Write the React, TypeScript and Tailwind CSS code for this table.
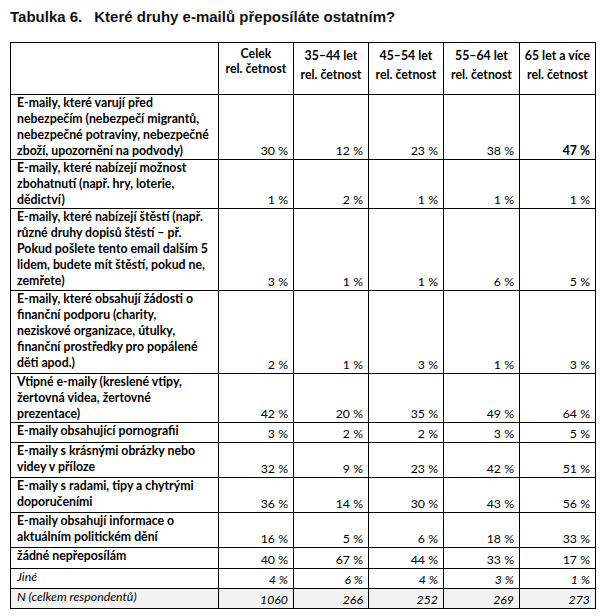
const rows: { label: React.ReactNode; vals: string[]; h?: string; bold47?: boolean }[] = [
  {
    label: (
      <>
        E-maily, které varují před
        <br />
        nebezpečím (nebezpečí migrantů,
        <br />
        nebezpečné potraviny, nebezpečné
        <br />
        zboží, upozornění na podvody)
      </>
    ),
    vals: ['30 %', '12 %', '23 %', '38 %', '47 %'],
    bold47: true,
  },
  {
    label: (
      <>
        E-maily, které nabízejí možnost
        <br />
        zbohatnutí (např. hry, loterie,
        <br />
        dědictví)
      </>
    ),
    vals: ['1 %', '2 %', '1 %', '1 %', '1 %'],
  },
  {
    label: (
      <>
        E-maily, které nabízejí štěstí (např.
        <br />
        různé druhy dopisů štěstí – př.
        <br />
        Pokud pošlete tento email dalším 5
        <br />
        lidem, budete mít štěstí, pokud ne,
        <br />
        zemřete)
      </>
    ),
    vals: ['3 %', '1 %', '1 %', '6 %', '5 %'],
    h: 'h-[82px]',
  },
  {
    label: (
      <>
        E-maily, které obsahují žádosti o
        <br />
        finanční podporu (charity,
        <br />
        neziskové organizace, útulky,
        <br />
        finanční prostředky pro popálené
        <br />
        děti apod.)
      </>
    ),
    vals: ['2 %', '1 %', '3 %', '1 %', '3 %'],
    h: 'h-[83px]',
  },
  {
    label: (
      <>
        Vtipné e-maily (kreslené vtipy,
        <br />
        žertovná videa, žertovné
        <br />
        prezentace)
      </>
    ),
    vals: ['42 %', '20 %', '35 %', '49 %', '64 %'],
  },
  { label: 'E-maily obsahující pornografii', vals: ['3 %', '2 %', '2 %', '3 %', '5 %'], h: 'h-[20px]' },
  {
    label: (
      <>
        E-maily s krásnými obrázky nebo
        <br />
        videy v příloze
      </>
    ),
    vals: ['32 %', '9 %', '23 %', '42 %', '51 %'],
    h: 'h-[35px]',
  },
  {
    label: (
      <>
        E-maily s radami, tipy a chytrými
        <br />
        doporučeními
      </>
    ),
    vals: ['36 %', '14 %', '30 %', '43 %', '56 %'],
    h: 'h-[35px]',
  },
  {
    label: (
      <>
        E-maily obsahují informace o
        <br />
        aktuálním politickém dění
      </>
    ),
    vals: ['16 %', '5 %', '6 %', '18 %', '33 %'],
    h: 'h-[35px]',
  },
  { label: 'žádné nepřeposílám', vals: ['40 %', '67 %', '44 %', '33 %', '17 %'], h: 'h-[21px]' },
];

const heads = [
  ['35–44 let', 'rel. četnost'],
  ['45–54 let', 'rel. četnost'],
  ['55–64 let', 'rel. četnost'],
  ['65 let a více', 'rel. četnost'],
];

const cell = 'border border-black align-bottom text-right pr-[5px] py-0';

export default function App() {
  return (
    <div className="min-h-screen bg-white text-black font-['Lato',sans-serif]">
      <div className="pl-[10px] pt-[7px] pb-0">
        <h1 className="font-['Liberation_Sans',Arial,sans-serif] text-[15px] font-bold leading-[20px] text-[#111]">
          <span className="mr-[12px]">Tabulka 6.</span>Které druhy e-mailů přeposíláte ostatním?
        </h1>
      </div>
      <table className="mt-[15px] ml-[10px] w-[585px] table-fixed border-collapse text-[12.3px] leading-[16px]">
        <colgroup>
          <col className="w-[208px]" />
          <col className="w-[75px]" />
          <col className="w-[75px]" />
          <col className="w-[75px]" />
          <col className="w-[76px]" />
          <col className="w-[76px]" />
        </colgroup>
        <thead>
          <tr className="h-[52px]">
            <th className="border border-black" />
            <th className="border border-black align-top pt-[3px] text-center font-bold leading-[15px]">
              Celek
              <br />
              rel. četnost
            </th>
            {heads.map((h) => (
              <th key={h[0]} className="border border-black align-top pt-[3px] text-center font-bold leading-[19px]">
                {h[0]}
                <br />
                {h[1]}
              </th>
            ))}
          </tr>
        </thead>
        <tbody>
          {rows.map((r, i) => (
            <tr key={i} className={r.h}>
              <td className="border border-black align-top pl-[6px] pr-0 py-0 font-bold whitespace-nowrap">
                {r.label}
              </td>
              {r.vals.map((v, j) => (
                <td key={j} className={`${cell} ${r.bold47 && j === 4 ? 'font-bold' : ''}`}>
                  {v}
                </td>
              ))}
            </tr>
          ))}
          <tr className="h-[20px] italic">
            <td className="border border-black align-top pl-[6px] py-0">Jiné</td>
            {['4 %', '6 %', '4 %', '3 %', '1 %'].map((v, j) => (
              <td key={j} className={cell}>
                {v}
              </td>
            ))}
          </tr>
          <tr className="h-[20px] italic bg-[#f2f2f2]">
            <td className="border border-black align-top pl-[6px] py-0">N (celkem respondentů)</td>
            {['1060', '266', '252', '269', '273'].map((v, j) => (
              <td key={j} className={cell}>
                {v}
              </td>
            ))}
          </tr>
        </tbody>
      </table>
    </div>
  );
}
